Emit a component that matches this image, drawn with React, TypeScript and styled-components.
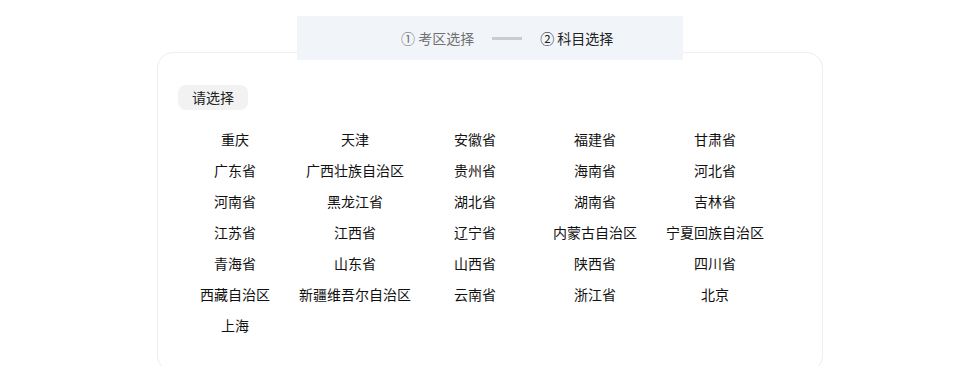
import React from "react";
import styled, { createGlobalStyle } from "styled-components";

const GlobalStyle = createGlobalStyle`
  html, body {
    margin: 0;
    padding: 0;
    background: #ffffff;
    font-family: "Noto Sans CJK SC", "Noto Sans", sans-serif;
  }
`;

const Page = styled.div`
  width: 980px;
  display: flex;
  flex-direction: column;
  align-items: center;
  padding-top: 16px;
`;

const StepBar = styled.div`
  position: relative;
  z-index: 1;
  width: 386px;
  height: 44px;
  box-sizing: border-box;
  padding-left: 104px;
  background: #f1f5fa;
  display: flex;
  align-items: center;
  gap: 18px;
`;

const Step = styled.div<{ $active?: boolean }>`
  font-size: 14px;
  line-height: 20px;
  color: ${(p) => (p.$active ? "#222222" : "#707070")};
  white-space: nowrap;
  display: flex;
  align-items: center;
  gap: 4px;
`;

const StepLine = styled.div`
  width: 30px;
  height: 3px;
  background: #cccccc;
`;

const Card = styled.div`
  margin-top: -8px;
  width: 666px;
  box-sizing: border-box;
  border: 1px solid #eeeeee;
  border-radius: 16px;
  padding: 31px 20px 30px;
  background: #ffffff;
`;

const Tag = styled.div`
  display: inline-flex;
  align-items: center;
  height: 25px;
  padding: 0 14px;
  border-radius: 8px;
  background: #f2f2f2;
  font-size: 14px;
  color: #222222;
`;

const Grid = styled.div`
  margin: 14px 0 0 -3px;
  display: grid;
  grid-template-columns: repeat(5, 120px);
`;

const Item = styled.div`
  height: 31px;
  line-height: 31px;
  text-align: center;
  font-size: 14px;
  color: #111111;
  white-space: nowrap;
  cursor: pointer;
`;

const regions = [
  "重庆", "天津", "安徽省", "福建省", "甘肃省",
  "广东省", "广西壮族自治区", "贵州省", "海南省", "河北省",
  "河南省", "黑龙江省", "湖北省", "湖南省", "吉林省",
  "江苏省", "江西省", "辽宁省", "内蒙古自治区", "宁夏回族自治区",
  "青海省", "山东省", "山西省", "陕西省", "四川省",
  "西藏自治区", "新疆维吾尔自治区", "云南省", "浙江省", "北京",
  "上海",
];

export default function App() {
  return (
    <>
      <GlobalStyle />
      <Page>
        <StepBar>
          <Step>① 考区选择</Step>
          <StepLine />
          <Step $active>② 科目选择</Step>
        </StepBar>
        <Card>
          <Tag>请选择</Tag>
          <Grid>
            {regions.map((r) => (
              <Item key={r}>{r}</Item>
            ))}
          </Grid>
        </Card>
      </Page>
    </>
  );
}
